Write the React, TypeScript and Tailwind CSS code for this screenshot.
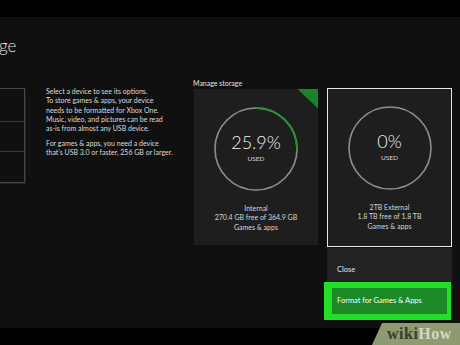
import React from 'react';

const FONT = "font-['Lato','Open_Sans',sans-serif]";

function Gauge({ value, label }: { value: number; label: string }) {
  const r = 41;
  const c = 2 * Math.PI * r;
  return (
    <div className="relative w-[84px] h-[84px] flex flex-col items-center justify-center">
      <svg className="absolute inset-0" width="84" height="84" viewBox="0 0 84 84">
        <defs>
          <linearGradient id="arc" x1="0" y1="0" x2="1" y2="1">
            <stop offset="0" stopColor="#566d57" />
            <stop offset="1" stopColor="#1f9a33" />
          </linearGradient>
        </defs>
        <circle cx="42" cy="42" r={r} fill="none" stroke="#8e8e8e" strokeWidth="1.6" />
        {value > 0 && (
          <circle
            cx="42"
            cy="42"
            r={r}
            fill="none"
            stroke="url(#arc)"
            strokeWidth="1.8"
            strokeDasharray={`${(c * value) / 100} ${c}`}
            transform="rotate(-90 42 42)"
          />
        )}
      </svg>
      <div className="relative flex flex-col items-center pb-[2px]">
        <span className="text-[18px] leading-[18px] font-light text-[#f2f2f2]">{label}</span>
        <span className="text-[6.5px] leading-[8px] mt-[4px] text-[#d8d8d8]">USED</span>
      </div>
    </div>
  );
}

function CardText({ lines }: { lines: string[] }) {
  return (
    <div className="mt-[13px] flex flex-col items-center text-[7px] leading-[9.5px] text-[#d6d6d6]">
      {lines.map((l) => (
        <span key={l}>{l}</span>
      ))}
    </div>
  );
}

export default function App() {
  return (
    <div className={`w-[460px] h-[345px] bg-[#101010] flex flex-col relative overflow-hidden ${FONT}`}>
      <div className="h-[17px] bg-black" />

      <div className="flex-1 flex flex-col">
        {/* page title, only its tail is on screen */}
        <div className="mt-[19px] flex">
          <span className="-ml-[1px] whitespace-nowrap text-[17px] leading-[20px] font-light text-[#e6e6e6]">
            ge
          </span>
        </div>

        <div className="mt-[23px] flex items-start">
          {/* device list */}
          <div className="mt-[9px] -ml-[2px] w-[27px] h-[95px] border border-[#474747] shadow-[1px_1px_0_#222] flex flex-col">
            <div className="h-[33px] border-b border-[#3a3a3a]" />
            <div className="h-[30px] border-b border-[#3a3a3a]" />
            <div className="flex-1" />
          </div>

          {/* description */}
          <div className="ml-[21px] w-[148px] mt-[8px] text-[7px] leading-[9.3px] text-[#dcdcdc]">
            <p>Select a device to see its options.</p>
            <p>To store games &amp; apps, your device</p>
            <p>needs to be formatted for Xbox One.</p>
            <p>Music, video, and pictures can be read</p>
            <p>as-is from almost any USB device.</p>
            <p className="mt-[5.5px]">For games &amp; apps, you need a device</p>
            <p>that&rsquo;s USB 3.0 or faster, 256 GB or larger.</p>
          </div>

          {/* internal drive */}
          <div className="flex flex-col">
            <span className="text-[7px] leading-[9.5px] text-[#e0e0e0] -ml-[1px]">Manage storage</span>
            <div className="relative w-[124px] h-[156px] bg-[#1e1e1e] flex flex-col items-center pt-[18px]">
              <div className="absolute top-0 right-0 w-[21px] h-[20px] bg-[#17862a] [clip-path:polygon(0_0,100%_0,100%_100%)]" />
              <Gauge value={25.9} label="25.9%" />
              <CardText lines={['Internal', '270.4 GB free of 364.9 GB', 'Games & apps']} />
            </div>
          </div>

          {/* external drive + menu */}
          <div className="ml-[9px] mt-[8.5px] flex flex-col">
            <div className="w-[125px] h-[159px] bg-[#1e1e1e] border-[1.5px] border-[#e6e6e6] flex flex-col items-center pt-[17px]">
              <Gauge value={0} label="0%" />
              <CardText lines={['2TB External', '1.8 TB free of 1.8 TB', 'Games & apps']} />
            </div>
            <div className="mt-[1px] w-[125px] h-[72px] bg-[#222222] flex flex-col">
              <span className="mt-[17px] ml-[10px] text-[7.5px] leading-[10px] text-[#e4e4e4]">Close</span>
              <div className="mt-[7px] -ml-[3px] w-[127px] h-[38px] bg-[#1c8a26] border-[#22e02a] border-l-[8px] border-t-[6px] border-b-[6px] border-r-[4px] flex items-center">
                <span className="ml-[5px] text-[7.5px] leading-[10px] text-white">Format for Games &amp; Apps</span>
              </div>
            </div>
          </div>
        </div>
      </div>

      <div className="h-[17px] bg-black" />

      {/* watermark */}
      <div className="absolute right-0 bottom-0 w-[88px] h-[22px] bg-[#8e9a70] [clip-path:polygon(10px_0,100%_0,100%_100%,0_100%)] flex items-center pl-[15px]">
        <span className="font-['Liberation_Serif',serif] font-bold text-[16px] leading-[16px] tracking-[0.5px]">
          <span className="text-[#3a3b30]">wiki</span>
          <span className="text-[#d4d8c6]">How</span>
        </span>
      </div>
    </div>
  );
}
